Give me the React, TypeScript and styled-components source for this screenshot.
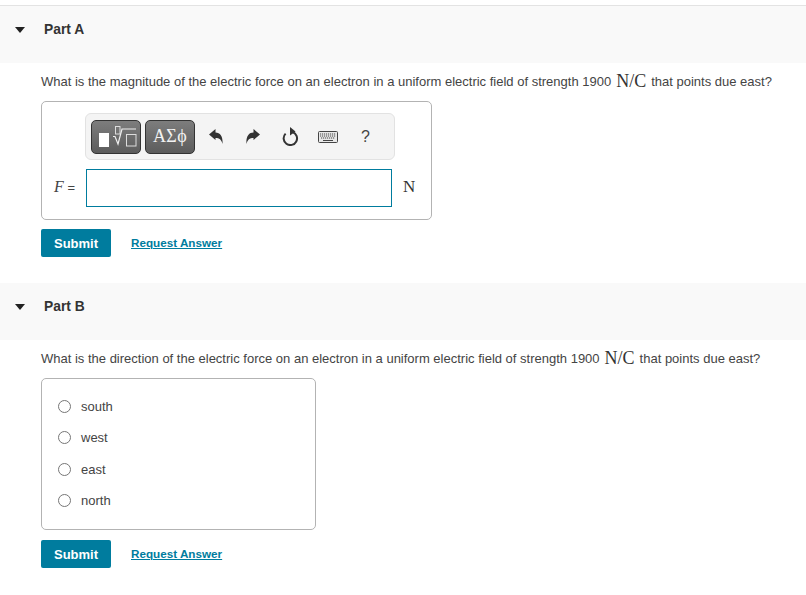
import React from 'react';
import styled, { createGlobalStyle } from 'styled-components';

const GlobalStyle = createGlobalStyle`
  html, body {
    margin: 0;
    padding: 0;
    background: #fff;
    font-family: "Liberation Sans", Arial, sans-serif;
    color: #333;
  }
`;

const Page = styled.div`
  width: 806px;
  height: 595px;
  padding-top: 5px;
  box-sizing: border-box;
  overflow: hidden;
`;

const PartHeader = styled.div<{ $first?: boolean }>`
  height: ${(p) => (p.$first ? '58px' : '57px')};
  box-sizing: border-box;
  background: #f9f9f9;
  border-top: ${(p) => (p.$first ? '1px solid #e3e3e3' : 'none')};
  display: flex;
  align-items: flex-start;
  padding-top: 15px;
  padding-left: 15px;
  margin-top: ${(p) => (p.$first ? '0' : '26px')};
`;

const Caret = styled.span`
  width: 0;
  height: 0;
  margin-top: 6px;
  border-left: 5px solid transparent;
  border-right: 5px solid transparent;
  border-top: 6px solid #222;
`;

const PartTitle = styled.div`
  margin-left: 19px;
  font-size: 13.8px;
  line-height: 17px;
  font-weight: 700;
  color: #333;
`;

const Body = styled.div`
  padding-left: 41px;
`;

const Question = styled.div`
  height: 38px;
  box-sizing: border-box;
  padding-bottom: 2px;
  display: flex;
  align-items: center;
  font-size: 13px;
  white-space: pre;
  color: #444;
`;

const MathText = styled.span`
  font-family: "Liberation Serif", serif;
  font-size: 18px;
  color: #333;
  margin: 0 5px 0 5px;
`;

const AnswerBox = styled.div`
  width: 391px;
  height: 119px;
  box-sizing: border-box;
  border: 1px solid #b3b3b3;
  border-radius: 5px;
  padding: 11px 0 0 43px;
`;

const Toolbar = styled.div`
  width: 310px;
  height: 47px;
  box-sizing: border-box;
  background: #f4f4f4;
  border: 1px solid #e2e2e2;
  border-radius: 6px;
  display: flex;
  align-items: center;
  padding-left: 5px;
`;

const ToolButton = styled.div`
  width: 50px;
  height: 34px;
  box-sizing: border-box;
  border: 1px solid #333;
  border-radius: 5px;
  background: linear-gradient(#7d7d7d, #5c5c5c);
  color: #fff;
  display: flex;
  align-items: center;
  justify-content: center;

  & + & {
    margin-left: 4px;
  }
`;

const GreekLabel = styled.span`
  font-family: "Liberation Serif", serif;
  font-size: 18px;
  letter-spacing: 0.3px;
  color: #f2f2f2;
`;

const IconRow = styled.div`
  display: flex;
  margin-left: 2.3px;
`;

const IconSlot = styled.div`
  width: 37.4px;
  display: flex;
  justify-content: center;
  align-items: center;
  color: #333;
`;

const HelpMark = styled.span`
  font-size: 16px;
  color: #444;
`;

const InputRow = styled.div`
  display: flex;
  align-items: center;
  margin: 9px 0 0 -32px;
`;

const VarLabel = styled.span`
  width: 33px;
  padding-bottom: 3px;
  font-size: 13px;
  white-space: pre;
  color: #444;
`;

const VarName = styled.i`
  font-family: "Liberation Serif", serif;
  font-size: 16px;
  margin-left: 1px;
`;

const AnswerField = styled.div`
  width: 306px;
  height: 38px;
  box-sizing: border-box;
  border: 1px solid #007c9e;
  background: #fff;
`;

const Unit = styled.span`
  margin-left: 11px;
  padding-bottom: 3px;
  font-family: "Liberation Serif", serif;
  font-size: 17px;
  color: #333;
`;

const Actions = styled.div<{ $top: number }>`
  display: flex;
  align-items: center;
  margin-top: ${(p) => p.$top}px;
`;

const SubmitButton = styled.button`
  width: 70px;
  height: 28px;
  padding: 0;
  border: none;
  border-radius: 2px;
  background: #007c9e;
  color: #fff;
  font-family: inherit;
  font-size: 13px;
  font-weight: 700;
`;

const RequestLink = styled.a`
  margin-left: 20px;
  margin-bottom: 2px;
  font-size: 11.7px;
  font-weight: 700;
  color: #007c9e;
  text-decoration: underline;
`;

const ChoiceBox = styled.div`
  width: 275px;
  height: 152px;
  box-sizing: border-box;
  border: 1px solid #b3b3b3;
  border-radius: 5px;
  padding: 11.6px 0 0 16px;
`;

const Choice = styled.div`
  height: 31.4px;
  display: flex;
  align-items: center;
  font-size: 13px;
  color: #444;
`;

const RadioMark = styled.span`
  width: 13px;
  height: 13px;
  box-sizing: border-box;
  border: 1px solid #767676;
  border-radius: 50%;
  background: #fff;
  margin-right: 10px;
`;

const choices = ['south', 'west', 'east', 'north'];

function TemplateIcon() {
  return (
    <svg width="48" height="32" viewBox="0 0 48 32">
      <rect x="7" y="12" width="10" height="14" fill="#fff" />
      <rect x="23.5" y="5.5" width="4.5" height="7.5" fill="none" stroke="#ddd" strokeWidth="1" />
      <path d="M21 15.5h2l3 7.5 4-15h14" fill="none" stroke="#eee" strokeWidth="1.2" />
      <rect x="34.5" y="13.5" width="9.5" height="11.5" fill="none" stroke="#ddd" strokeWidth="1" />
    </svg>
  );
}

function ArrowIcon({ flip }: { flip?: boolean }) {
  return (
    <svg width="14" height="15" viewBox="0 0 14 15" style={flip ? { transform: 'scaleX(-1)' } : undefined}>
      <path d="M0 5.5L6.5 0V3.6C11 3.6 14 7 13.6 15C12.4 10.6 10.4 9 6.5 9V11Z" fill="#333" />
    </svg>
  );
}

function RedoIcon() {
  return (
    <svg width="17" height="19" viewBox="0 0 17 19">
      <path d="M10.5 5A6.7 6.7 0 1 1 3.6 6.6" fill="none" stroke="#333" strokeWidth="2" />
      <path d="M8 0L13.5 4.5L8 8.5Z" fill="#333" />
    </svg>
  );
}

function KeyboardIcon() {
  return (
    <svg width="20" height="12" viewBox="0 0 20 12">
      <rect x="0.5" y="0.5" width="19" height="11" rx="1" fill="#e8e8e8" stroke="#444" />
      <path d="M2 3h16M2 5h16M3 7h14" stroke="#444" strokeWidth="1" strokeDasharray="1.2 0.8" />
      <path d="M5 9.5h10" stroke="#444" strokeWidth="1" />
    </svg>
  );
}

function Actionbar({ top }: { top: number }) {
  return (
    <Actions $top={top}>
      <SubmitButton>Submit</SubmitButton>
      <RequestLink>Request Answer</RequestLink>
    </Actions>
  );
}

function PartQuestion({ text }: { text: string }) {
  return (
    <Question>
      {text}
      <MathText>N/C</MathText>
      that points due east?
    </Question>
  );
}

export default function App() {
  return (
    <Page>
      <GlobalStyle />
      <PartHeader $first>
        <Caret />
        <PartTitle>Part A</PartTitle>
      </PartHeader>
      <Body>
        <PartQuestion text="What is the magnitude of the electric force on an electron in a uniform electric field of strength 1900" />
        <AnswerBox>
          <Toolbar>
            <ToolButton><TemplateIcon /></ToolButton>
            <ToolButton><GreekLabel>ΑΣϕ</GreekLabel></ToolButton>
            <IconRow>
              <IconSlot><ArrowIcon /></IconSlot>
              <IconSlot><ArrowIcon flip /></IconSlot>
              <IconSlot><RedoIcon /></IconSlot>
              <IconSlot><KeyboardIcon /></IconSlot>
              <IconSlot><HelpMark>?</HelpMark></IconSlot>
            </IconRow>
          </Toolbar>
          <InputRow>
            <VarLabel><VarName>F</VarName> =</VarLabel>
            <AnswerField />
            <Unit>N</Unit>
          </InputRow>
        </AnswerBox>
        <Actionbar top={9} />
      </Body>
      <PartHeader>
        <Caret />
        <PartTitle>Part B</PartTitle>
      </PartHeader>
      <Body>
        <PartQuestion text="What is the direction of the electric force on an electron in a uniform electric field of strength 1900" />
        <ChoiceBox>
          {choices.map((c) => (
            <Choice key={c}>
              <RadioMark />
              {c}
            </Choice>
          ))}
        </ChoiceBox>
        <Actionbar top={10} />
      </Body>
    </Page>
  );
}
